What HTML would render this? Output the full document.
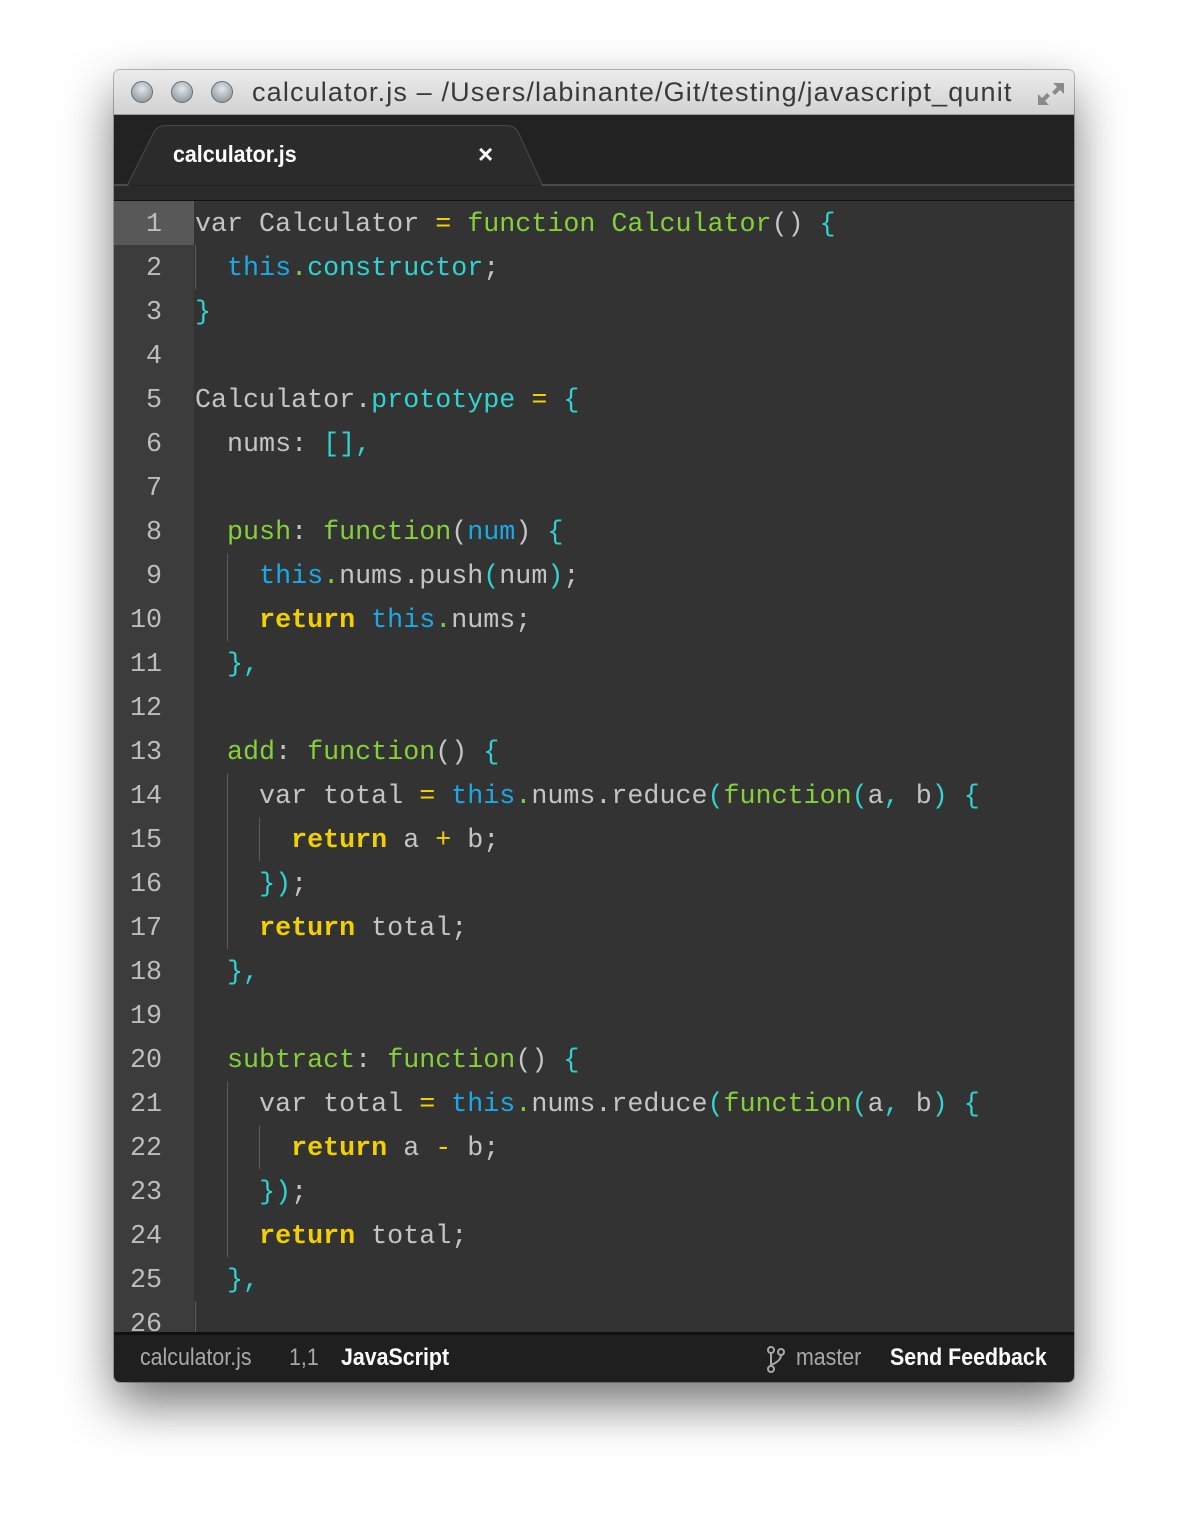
<!DOCTYPE html>
<html><head><meta charset="utf-8"><style>
body{margin:0;width:1188px;height:1540px;background:#fff;position:relative;overflow:hidden;font-family:"Liberation Sans",sans-serif}
.win{position:absolute;left:114px;top:70px;width:960px;height:1312px;border-radius:6px;overflow:hidden;box-shadow:0 22px 50px rgba(0,0,0,.55),0 0 0 1px rgba(0,0,0,.25)}
.title{position:absolute;left:0;top:0;width:960px;height:44px;background:linear-gradient(#ececec,#d2d2d2);border-bottom:1px solid #9a9a9a}
.dot{position:absolute;top:11px;width:22px;height:22px;border-radius:50%;background:radial-gradient(circle at 50% 35%,#e4e8ec,#9aa3ab 70%,#7b848c);border:1px solid #6a7077;box-sizing:border-box}
.ttext{position:absolute;left:138px;top:7px;font-size:27px;color:#3a3a3a;white-space:nowrap;letter-spacing:1.15px}
.tabbar{position:absolute;left:0;top:45px;width:960px;height:85px;background:#222}
.editor{position:absolute;left:0;top:130px;width:960px;height:1132px;background:#333;border-top:1px solid #111}
.gutter{position:absolute;left:0;top:0;width:80px;height:1132px;background:#3c3c3c}
.ln{position:absolute;left:0;width:48px;text-align:right;font-family:"Liberation Mono",monospace;font-size:26.7px;color:#bdbdbd;line-height:44px;margin-top:2px}
.code{position:absolute;left:81px;font-family:"Liberation Mono",monospace;font-size:26.7px;line-height:44px;white-space:pre;color:#c4c4c4;margin-top:2px}
.g{color:#86cf3a}.y{color:#f2d000}.b{color:#1aa9e4}.c{color:#2fd3d0}.k{color:#f2d000;font-weight:bold}
.guide{position:absolute;width:1px;background:#5a5a5a}
.status{position:absolute;left:0;top:1262px;width:960px;height:50px;background:#1f1f1f;border-top:3px solid #111;font-size:24px;color:#a8a8a8}
.status span{position:absolute;top:9px;white-space:nowrap;transform:scaleX(.89);transform-origin:0 0}
</style></head><body>
<div class="win">
 <div class="title">
  <div class="dot" style="left:17px"></div><div class="dot" style="left:57px"></div><div class="dot" style="left:97px"></div>
  <div class="ttext">calculator.js – /Users/labinante/Git/testing/javascript_qunit</div>
  <svg style="position:absolute;left:922px;top:10px" width="30" height="28" viewBox="0 0 30 28"><path d="M17 3h11v11l-4-4-5 5-3-3 5-5z M2 14v11h11l-4-4 5-5-3-3-5 5z" fill="#8a8a8a"/></svg>
 </div>
 <div class="tabbar">
  <svg style="position:absolute;left:0;top:0" width="960" height="85"><path d="M0 70H14L40 18Q44 11 52 11H392Q400 11 404 18L428 70H960" fill="none" stroke="#4a4a4a" stroke-width="2"/><path d="M14 70L40 18Q44 11 52 11H392Q400 11 404 18L428 70Z" fill="#2b2b2b"/><rect x="0" y="71" width="960" height="14" fill="#2a2a2a"/></svg>
  <div style="position:absolute;left:59px;top:26px;color:#fff;font-weight:bold;font-size:23px;transform:scaleX(.93);transform-origin:0 0">calculator.js</div>
  <div style="position:absolute;left:364px;top:24px;color:#fff;font-weight:bold;font-size:26px">×</div>
 </div>
 <div class="editor">
  <div class="gutter"></div>
  <div style="position:absolute;left:0;top:0;width:80px;height:44px;background:#585858"></div>
  <div class="guide" style="left:81px;top:44px;height:44px"></div>
  <div class="guide" style="left:113px;top:352px;height:88px"></div>
  <div class="guide" style="left:113px;top:572px;height:176px"></div>
  <div class="guide" style="left:145px;top:616px;height:44px"></div>
  <div class="guide" style="left:113px;top:880px;height:176px"></div>
  <div class="guide" style="left:145px;top:924px;height:44px"></div>
  <div class="guide" style="left:81px;top:1100px;height:32px"></div>
  <div class="ln" style="top:0">1</div><div class="ln" style="top:44px">2</div><div class="ln" style="top:88px">3</div><div class="ln" style="top:132px">4</div><div class="ln" style="top:176px">5</div><div class="ln" style="top:220px">6</div><div class="ln" style="top:264px">7</div><div class="ln" style="top:308px">8</div><div class="ln" style="top:352px">9</div><div class="ln" style="top:396px">10</div><div class="ln" style="top:440px">11</div><div class="ln" style="top:484px">12</div><div class="ln" style="top:528px">13</div><div class="ln" style="top:572px">14</div><div class="ln" style="top:616px">15</div><div class="ln" style="top:660px">16</div><div class="ln" style="top:704px">17</div><div class="ln" style="top:748px">18</div><div class="ln" style="top:792px">19</div><div class="ln" style="top:836px">20</div><div class="ln" style="top:880px">21</div><div class="ln" style="top:924px">22</div><div class="ln" style="top:968px">23</div><div class="ln" style="top:1012px">24</div><div class="ln" style="top:1056px">25</div><div class="ln" style="top:1100px">26</div>
<div class="code" style="top:0">var Calculator <span class="y">=</span> <span class="g">function Calculator</span>() <span class="c">{</span></div>
<div class="code" style="top:44px">  <span class="b">this</span><span class="g">.</span><span class="c">constructor</span>;</div>
<div class="code" style="top:88px"><span class="c">}</span></div>
<div class="code" style="top:176px">Calculator.<span class="c">prototype</span> <span class="y">=</span> <span class="c">{</span></div>
<div class="code" style="top:220px">  nums: <span class="c">[],</span></div>
<div class="code" style="top:308px">  <span class="g">push</span>: <span class="g">function</span>(<span class="b">num</span>) <span class="c">{</span></div>
<div class="code" style="top:352px">    <span class="b">this</span><span class="g">.</span>nums.push<span class="c">(</span>num<span class="c">)</span>;</div>
<div class="code" style="top:396px">    <span class="k">return</span> <span class="b">this</span><span class="g">.</span>nums;</div>
<div class="code" style="top:440px">  <span class="c">},</span></div>
<div class="code" style="top:528px">  <span class="g">add</span>: <span class="g">function</span>() <span class="c">{</span></div>
<div class="code" style="top:572px">    var total <span class="y">=</span> <span class="b">this</span><span class="g">.</span>nums.reduce<span class="c">(</span><span class="g">function</span><span class="c">(</span>a<span class="c">,</span> b<span class="c">)</span> <span class="c">{</span></div>
<div class="code" style="top:616px">      <span class="k">return</span> a <span class="y">+</span> b;</div>
<div class="code" style="top:660px">    <span class="c">})</span>;</div>
<div class="code" style="top:704px">    <span class="k">return</span> total;</div>
<div class="code" style="top:748px">  <span class="c">},</span></div>
<div class="code" style="top:836px">  <span class="g">subtract</span>: <span class="g">function</span>() <span class="c">{</span></div>
<div class="code" style="top:880px">    var total <span class="y">=</span> <span class="b">this</span><span class="g">.</span>nums.reduce<span class="c">(</span><span class="g">function</span><span class="c">(</span>a<span class="c">,</span> b<span class="c">)</span> <span class="c">{</span></div>
<div class="code" style="top:924px">      <span class="k">return</span> a <span class="y">-</span> b;</div>
<div class="code" style="top:968px">    <span class="c">})</span>;</div>
<div class="code" style="top:1012px">    <span class="k">return</span> total;</div>
<div class="code" style="top:1056px">  <span class="c">},</span></div>
 </div>
 <div class="status">
  <span style="left:26px">calculator.js</span>
  <span style="left:175px">1,1</span>
  <span style="left:227px;color:#fff;font-weight:bold">JavaScript</span>
  <svg style="position:absolute;left:652px;top:11px" width="20" height="28" viewBox="0 0 20 28"><circle cx="5" cy="4" r="3" fill="none" stroke="#a8a8a8" stroke-width="2"/><circle cx="5" cy="23" r="3" fill="none" stroke="#a8a8a8" stroke-width="2"/><circle cx="15" cy="6" r="3" fill="none" stroke="#a8a8a8" stroke-width="2"/><path d="M5 7v13M15 9q0 6-10 10" fill="none" stroke="#a8a8a8" stroke-width="2"/></svg>
  <span style="left:682px">master</span>
  <span style="left:776px;color:#fff;font-weight:bold">Send Feedback</span>
 </div>
</div>
</body></html>
